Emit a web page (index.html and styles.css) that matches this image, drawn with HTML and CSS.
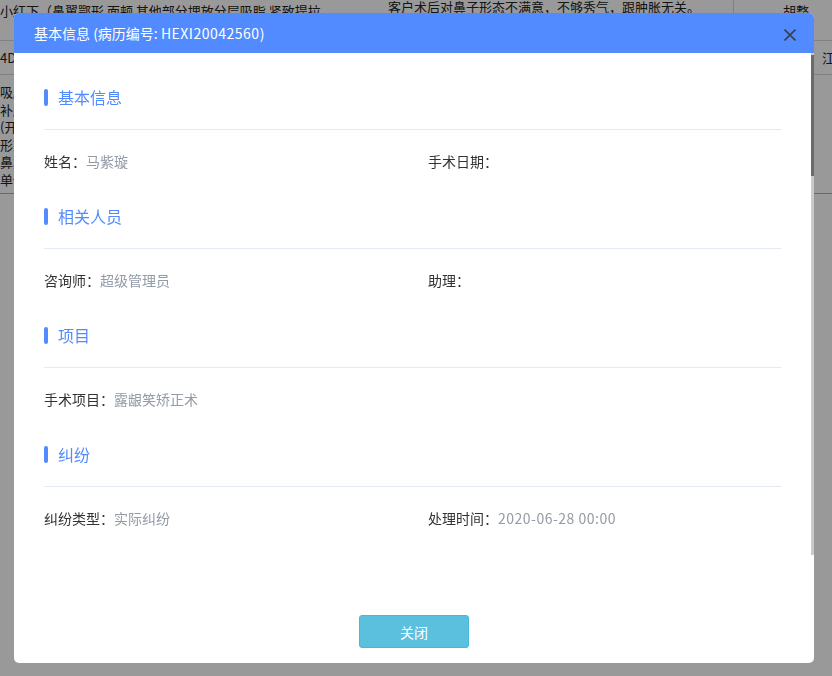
FILE: index.html
```html
<!DOCTYPE html>
<html lang="zh-CN">
<head>
<meta charset="utf-8">
<title>基本信息</title>
<link rel="stylesheet" href="styles.css">
</head>
<body>
<div class="page">
  <div class="row r1">
    <div class="c1">小红下（鼻翼鄂形 面颊 其他部分埋放分层吸脂 紧致提拉</div>
    <div class="c2">客户术后对鼻子形态不满意，不够秀气，跟肿胀无关。</div>
    <div class="c3">胡整</div>
  </div>
  <div class="row r2">
    <div class="c1">4D</div>
    <div class="c2"></div>
    <div class="c3 right">江</div>
  </div>
  <div class="row r3">
    <div class="c1 lines">
      <span>吸脂紧致提拉</span>
      <span>补脸填充</span>
      <span>(开眼角)</span>
      <span>形态调整</span>
      <span>鼻翼缩小</span>
      <span>单侧</span>
    </div>
    <div class="c2"></div>
    <div class="c3"></div>
  </div>
</div>

<div class="mask"></div>

<div class="modal">
  <div class="modal-header">
    <span class="modal-title">基本信息 (病历编号: <span class="latin">HEXI20042560</span>)</span>
    <svg class="close" width="12" height="12" viewBox="0 0 12 12"><path d="M0.5 0.5 L11.5 11.5 M11.5 0.5 L0.5 11.5" stroke="#3a3f4a" stroke-width="1.6" fill="none"/></svg>
  </div>
  <div class="modal-body">
    <div class="content">
      <section class="section">
        <h3 class="sec-title">基本信息</h3>
        <div class="fields">
          <div class="field"><span class="label">姓名：</span><span class="value">马紫璇</span></div>
          <div class="field"><span class="label">手术日期：</span><span class="value"></span></div>
        </div>
      </section>
      <section class="section">
        <h3 class="sec-title">相关人员</h3>
        <div class="fields">
          <div class="field"><span class="label">咨询师：</span><span class="value">超级管理员</span></div>
          <div class="field"><span class="label">助理：</span><span class="value"></span></div>
        </div>
      </section>
      <section class="section">
        <h3 class="sec-title">项目</h3>
        <div class="fields">
          <div class="field"><span class="label">手术项目：</span><span class="value">露龈笑矫正术</span></div>
        </div>
      </section>
      <section class="section">
        <h3 class="sec-title">纠纷</h3>
        <div class="fields">
          <div class="field"><span class="label">纠纷类型：</span><span class="value">实际纠纷</span></div>
          <div class="field"><span class="label">处理时间：</span><span class="value latin">2020-06-28 00:00</span></div>
        </div>
      </section>
    </div>
    <div class="scrollbar"><div class="thumb"></div></div>
  </div>
  <div class="modal-footer">
    <button class="btn-close" type="button">关闭</button>
  </div>
</div>
</body>
</html>
```
FILE: styles.css
```css
html, body {
  margin: 0;
  padding: 0;
}
body {
  width: 832px;
  height: 676px;
  overflow: hidden;
  background: #fff;
  font-family: "Noto Sans CJK SC", "Noto Sans", sans-serif;
  font-size: 13px;
  color: #222;
}

/* background page */
.page {
  width: 832px;
}
.row {
  display: flex;
  border-bottom: 1px solid #d8d8d8;
  white-space: nowrap;
  overflow: hidden;
}
.r1 { height: 40px; align-items: flex-start; line-height: 14px; }
.r1 .c1, .r1 .c3 { padding-top: 4px; }
.r1 .c2 { padding-top: 0; }
.r2 { height: 33px; align-items: center; }
.r3 { height: 118px; align-items: flex-start; border-bottom-color: #9ab3d8; }
.c1 { width: 388px; overflow: hidden; }
.c2 { width: 345px; overflow: hidden; border-right: 1px solid #d8d8d8; align-self: stretch; }
.c3 { flex: 1; padding-left: 49px; overflow: hidden; }
.c3.right { padding-left: 88px; }
.lines {
  display: flex;
  flex-direction: column;
  padding-top: 8px;
  line-height: 17.5px;
}

.mask {
  position: fixed;
  inset: 0;
  background: rgba(0, 0, 0, 0.4);
}

/* modal */
.modal {
  position: fixed;
  left: 14px;
  top: 13px;
  width: 800px;
  height: 650px;
  background: #fff;
  border-radius: 5px;
  overflow: hidden;
  display: flex;
  flex-direction: column;
}
.modal-header {
  height: 40px;
  flex: none;
  background: #528bff;
  color: #fff;
  display: flex;
  align-items: center;
  justify-content: space-between;
  padding: 0 18px 0 20px;
  font-size: 14px;
}
.latin {
  letter-spacing: 0.5px;
}
.close {
  margin-top: 4px;
}
.modal-body {
  height: 502px;
  flex: none;
  display: flex;
  overflow: hidden;
}
.content {
  flex: 1;
  padding: 32px 30px 0 30px;
}
.scrollbar {
  flex: none;
  width: 3px;
  background: #cacaca;
}
.thumb {
  height: 121px;
  margin-top: 2px;
  background: #6b6b6b;
}
.section {
  margin: 0 0 33px 0;
}
.sec-title {
  margin: 0;
  height: 24px;
  line-height: 24px;
  font-size: 16px;
  font-weight: normal;
  color: #528bff;
  display: flex;
  align-items: center;
  gap: 10px;
  padding-bottom: 20px;
  border-bottom: 1px solid #e3eaf2;
  box-sizing: content-box;
}
.sec-title::before {
  content: "";
  width: 4px;
  height: 17px;
  border-radius: 2px;
  background: #528bff;
}
.fields {
  display: grid;
  grid-template-columns: 384px 1fr;
  margin-top: 21px;
  line-height: 20px;
  font-size: 14px;
}
.label {
  color: #333;
}
.value {
  color: #939ba6;
}

.modal-footer {
  flex: 1;
  display: flex;
  justify-content: center;
  align-items: flex-end;
  padding-bottom: 15px;
}
.btn-close {
  width: 110px;
  height: 33px;
  box-sizing: border-box;
  background: #5bc0de;
  border: 1px solid #46b8da;
  border-radius: 3px;
  color: #fff;
  font-family: "Noto Sans CJK SC", sans-serif;
  font-size: 14px;
  padding: 0;
}
```
